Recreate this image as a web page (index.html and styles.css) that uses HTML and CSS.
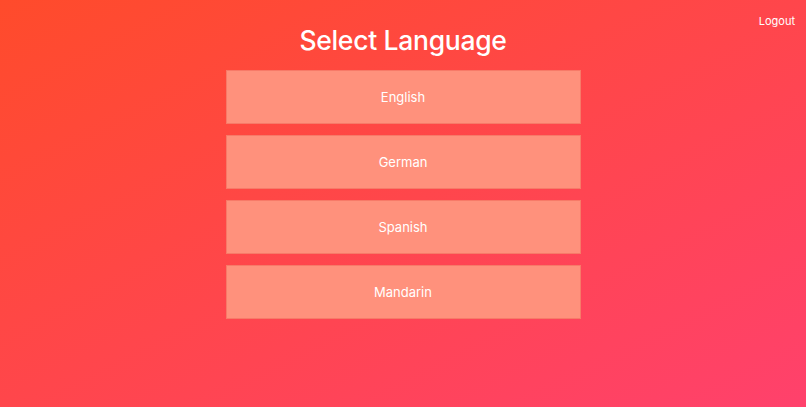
FILE: index.html
```html
<!DOCTYPE html>
<html lang="en">
<head>
<meta charset="utf-8">
<title>Select Language</title>
<link rel="stylesheet" href="styles.css">
</head>
<body>
<header class="topbar">
  <a class="logout" href="#">Logout</a>
</header>
<main class="page">
  <h1 class="title">Select Language</h1>
  <div class="options">
    <button class="option">English</button>
    <button class="option">German</button>
    <button class="option">Spanish</button>
    <button class="option">Mandarin</button>
  </div>
</main>
</body>
</html>
```

FILE: styles.css
```css
html, body {
  margin: 0;
  height: 100%;
}
body {
  font-family: "Inter", "Liberation Sans", Arial, sans-serif;
  background: linear-gradient(to bottom right, #ff4b2b, #ff416c);
  color: #fff;
  overflow: hidden;
}
.topbar {
  position: absolute;
  top: 0;
  right: 0;
  padding: 9px 11px 0 0;
}
.logout {
  color: #fff;
  text-decoration: none;
  font-size: 11px;
}
.page {
  display: flex;
  flex-direction: column;
  align-items: center;
  padding-top: 24px;
}
.title {
  margin: 0 0 14px;
  font-size: 26.5px;
  font-weight: 500;
  line-height: 32px;
  letter-spacing: -0.3px;
}
.options {
  display: flex;
  flex-direction: column;
  gap: 11px;
  width: 355px;
}
.option {
  height: 54px;
  background: #ff917c;
  border: 1px solid #f77a68;
  color: #fff;
  font-family: inherit;
  font-size: 13px;
  padding: 0;
  cursor: pointer;
}
```
